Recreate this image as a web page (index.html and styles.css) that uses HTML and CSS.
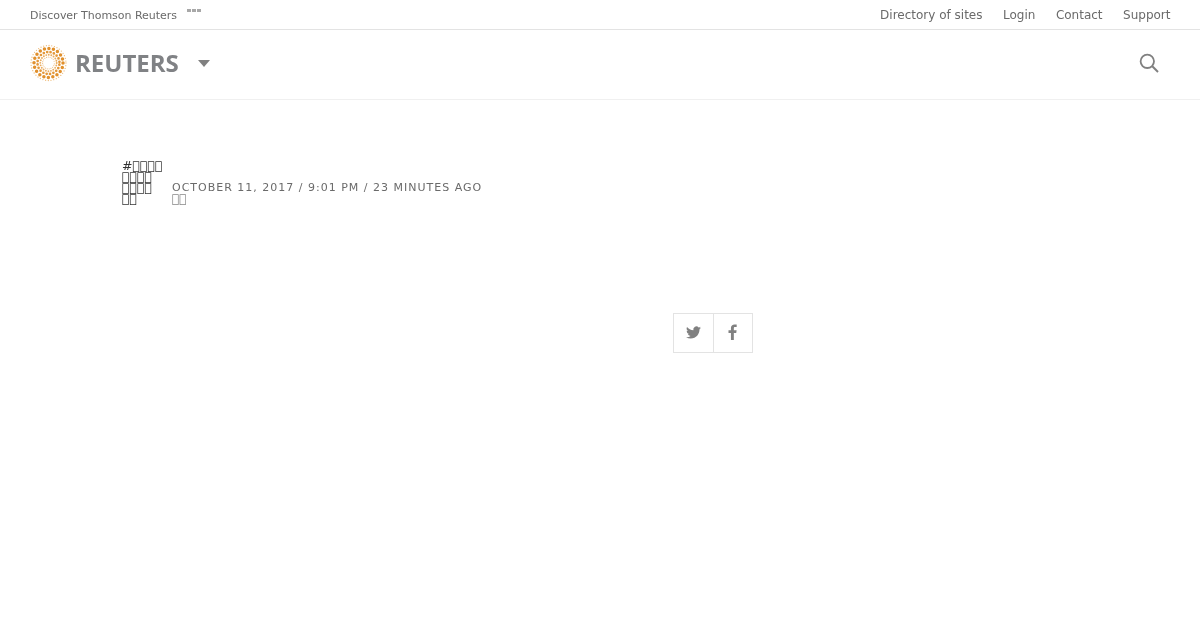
FILE: index.html
```html
<!DOCTYPE html>
<html lang="en">
<head>
<meta charset="utf-8">
<title>Reuters</title>
<link rel="stylesheet" href="styles.css">
</head>
<body>
<div class="topbar">
  <div class="discover"><span>Discover Thomson Reuters</span><i class="dots"><b></b><b></b><b></b></i></div>
  <nav class="toplinks"><a>Directory of sites</a><a>Login</a><a>Contact</a><a>Support</a></nav>
</div>
<header class="masthead">
  <div class="brand">
    <svg class="mark" viewBox="0 0 38 38" width="38" height="38" aria-hidden="true">
      <g fill="none" stroke-linecap="round">
        <circle cx="18.500" cy="19" r="17.500" stroke-width="1.300" stroke-dasharray="0 2.750" stroke="#eebb7a"/>
        <circle cx="18.500" cy="19" r="14.500" stroke-width="3.500" stroke-dasharray="0 4.555" stroke="#e1902c"/>
        <circle cx="18.500" cy="19" r="11" stroke-width="2.700" stroke-dasharray="0 3.456" stroke-dashoffset="1.700" stroke="#e4983a"/>
        <circle cx="18.500" cy="19" r="8.200" stroke-width="1.900" stroke-dasharray="0 2.576" stroke="#e9ac60"/>
        <circle cx="18.500" cy="19" r="5.900" stroke-width="1.200" stroke-dasharray="0 1.853" stroke-dashoffset="0.900" stroke="#f0c692"/>
      </g>
    </svg>
    <span class="wordmark">REUTERS</span>
    <i class="caret"></i>
  </div>
  <svg class="search" viewBox="0 0 20 20" width="20" height="20" aria-hidden="true">
    <circle cx="8.300" cy="8.300" r="6.700" fill="none" stroke="#808080" stroke-width="1.800"/>
    <path d="M13.300 13.300L19 19" stroke="#808080" stroke-width="2" fill="none"/>
  </svg>
</header>
<main class="article">
  <div class="meta">
    <div class="tag">#&#xE000;&#xE001;&#xE002;&#xE003; &#xE004;&#xE005;&#xE006;&#xE007; &#xE008;&#xE009;&#xE00A;&#xE00B; &#xE00C;&#xE00D;</div>
    <div class="date">OCTOBER 11, 2017 / 9:01 PM / 23 MINUTES AGO<br><span class="ago">&#xE00E;&#xE00F;</span></div>
  </div>
  <div class="share">
    <a class="share-btn"><svg class="share-icon" viewBox="0 0 24 24" width="15" height="15" aria-hidden="true"><path fill="#808080" d="M23.95 4.57a10 10 0 0 1-2.82.78 4.96 4.96 0 0 0 2.16-2.72 9.9 9.9 0 0 1-3.12 1.19 4.92 4.92 0 0 0-8.38 4.48C7.69 8.1 4.07 6.13 1.64 3.16a4.82 4.82 0 0 0-.66 2.47c0 1.71.87 3.21 2.19 4.1a4.9 4.9 0 0 1-2.23-.62v.06a4.92 4.92 0 0 0 3.95 4.83 4.9 4.9 0 0 1-2.21.08 4.94 4.94 0 0 0 4.6 3.42A9.87 9.87 0 0 1 0 19.54a14 14 0 0 0 7.56 2.21c9.05 0 14-7.5 14-13.98 0-.21 0-.42-.02-.63a9.9 9.9 0 0 0 2.41-2.57z"/></svg></a>
    <a class="share-btn"><svg class="share-icon" viewBox="0 0 10 18" width="9" height="16" aria-hidden="true"><path fill="#808080" d="M6.5 18V10h2.7l.4-3.1H6.500V4.900c0-.9.25-1.500 1.550-1.500H9.700V.6C9.400.56 8.400.47 7.300.47 4.900.47 3.250 1.900 3.250 4.600v2.300H.5V10h2.750v8z"/></svg></a>
  </div>
</main>
</body>
</html>
```
FILE: styles.css
```css
* { box-sizing: border-box; }
html, body { margin: 0; padding: 0; }
body {
  background: #fff;
  color: #6a6a6a;
  font-family: "DejaVu Sans", sans-serif;
  height: 630px;
  overflow: hidden;
}
.topbar {
  height: 30px;
  display: flex;
  justify-content: space-between;
  align-items: center;
  padding: 0 29.500px 0 30px;
  border-bottom: 1px solid #e3e3e3;
  will-change: opacity;
}
.discover {
  display: flex;
  font-size: 11px;
  line-height: 29px;
  padding-top: 2px;
  letter-spacing: -0.03px;
}
.dots {
  display: flex;
  gap: 1px;
  margin: 8px 0 0 10px;
  height: 3px;
}
.dots b {
  width: 4px;
  height: 3px;
  background: #a8a8a8;
}
.toplinks {
  display: flex;
  gap: 20.500px;
  font-size: 12px;
  line-height: 30px;
}
.masthead {
  height: 70px;
  display: flex;
  justify-content: space-between;
  align-items: center;
  padding: 0 41px 3px 30px;
  border-bottom: 1px solid #f0f0f0;
  will-change: opacity;
}
.brand {
  display: flex;
  align-items: center;
}
.mark { display: block; }
.wordmark {
  font-family: "Open Sans", sans-serif;
  font-weight: 700;
  font-size: 24px;
  color: #808285;
  margin: 0 0 1px 7px;
  line-height: 30px;
}
.caret {
  width: 0;
  height: 0;
  margin: 0 0 0 19px;
  border-left: 6px solid transparent;
  border-right: 6px solid transparent;
  border-top: 7px solid #808080;
}
.article {
  padding: 60px 0 0 122px;
}
.meta {
  display: flex;
  align-items: flex-end;
  gap: 10px;
  will-change: opacity;
}
.tag {
  width: 40px;
  font-size: 12.500px;
  line-height: 11px;
  color: #333;
}
.date {
  font-size: 11px;
  line-height: 11.500px;
  letter-spacing: 1px;
  position: relative;
  top: 1px;
}
.ago { letter-spacing: 0; font-size: 12px; color: #888; }
.share {
  display: flex;
  width: 80px;
  height: 40px;
  margin: 109px 0 0 551px;
  border: 1px solid #e3e3e3;
}
.share-btn {
  flex: 1;
  display: flex;
  align-items: center;
  justify-content: center;
}
.share-btn + .share-btn { border-left: 1px solid #e3e3e3; }
.share-icon { margin-bottom: 2px; }
```
